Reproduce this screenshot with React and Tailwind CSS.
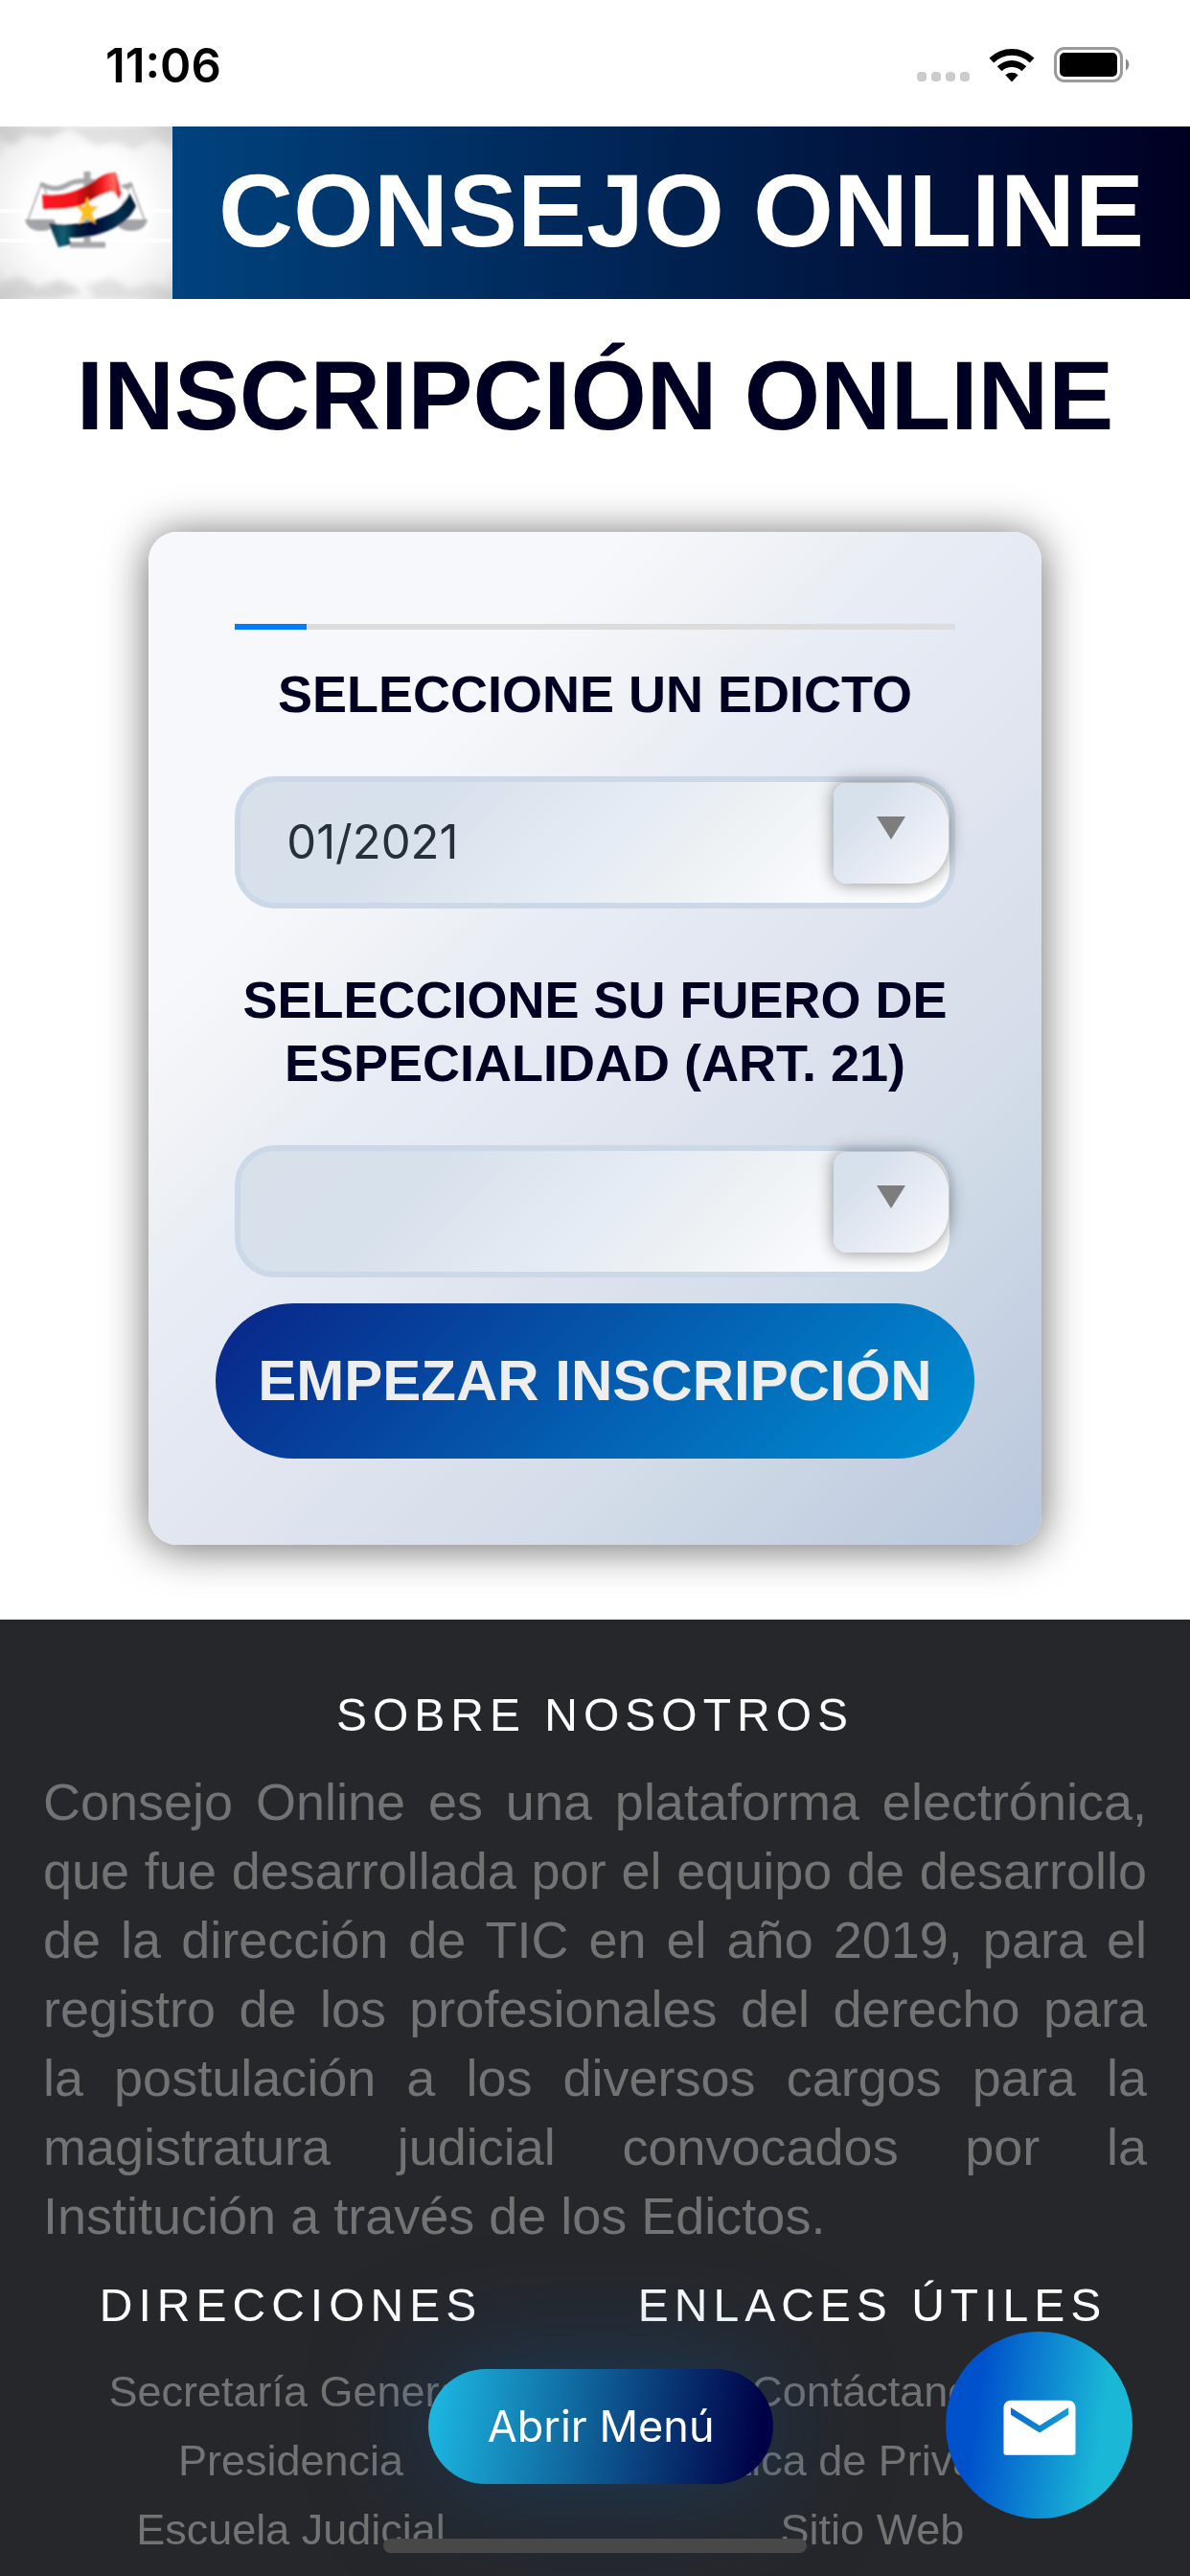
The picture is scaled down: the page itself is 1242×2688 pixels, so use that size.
import { useId } from "react";

const directions = ["Secretaría General", "Presidencia", "Escuela Judicial"];
const usefulLinks = ["Contáctanos", "Política de Privacidad", "Sitio Web"];

function StatusBar() {
  return (
    <div className="flex h-[132px] items-center justify-between pl-[110px] pr-[62px] pt-1">
      <time className="font-[Inter,sans-serif] text-[49px] font-semibold leading-none text-black">11:06</time>
      <div className="flex items-center gap-5">
        <div className="flex gap-[5px] pt-6">
          <span className="size-[10px] rounded-[4px] bg-[#cbcbcb]" />
          <span className="size-[10px] rounded-[4px] bg-[#cbcbcb]" />
          <span className="size-[10px] rounded-[4px] bg-[#cbcbcb]" />
          <span className="size-[10px] rounded-[4px] bg-[#cbcbcb]" />
        </div>
        <svg viewBox="0 0 48 36" className="h-9 w-12" aria-hidden="true">
          <path d="M0.5 10.5A34 34 0 0 1 47.5 10.5L42.8 15.4A27 27 0 0 0 5.2 15.4Z" />
          <path d="M8.8 19.2A22 22 0 0 1 39.2 19.2L34.4 24.2A15 15 0 0 0 13.6 24.2Z" />
          <path d="M17.4 28.2A10 10 0 0 1 30.6 28.2L24 35.4Z" />
        </svg>
        <svg viewBox="0 0 80 38" className="h-[38px] w-20" aria-hidden="true">
          <rect x="1.5" y="1.5" width="69" height="34" rx="9.5" fill="none" stroke="#9a9a9a" strokeWidth="3" />
          <rect x="6" y="6" width="60" height="25" rx="5" />
          <path d="M75 12.5A7 7 0 0 1 75 24.5Z" fill="#8a8a8a" />
        </svg>
      </div>
    </div>
  );
}

function Emblem() {
  return (
    <svg viewBox="0 0 180 180" className="size-[180px] shrink-0" role="img" aria-label="Consejo de la Magistratura">
      <defs>
        <radialGradient id="paper" cx="50%" cy="50%" r="72%">
          <stop offset="0.5" stopColor="#fdfdfd" />
          <stop offset="0.8" stopColor="#eeeeee" />
          <stop offset="1" stopColor="#c9c9c9" />
        </radialGradient>
        <linearGradient id="red" x1="0" x2="1">
          <stop offset="0" stopColor="#ff1a22" />
          <stop offset="0.42" stopColor="#f0131b" />
          <stop offset="0.6" stopColor="#a50a0c" />
          <stop offset="0.75" stopColor="#f5191f" />
          <stop offset="0.9" stopColor="#ff6a5e" />
          <stop offset="1" stopColor="#d8141a" />
        </linearGradient>
        <linearGradient id="navy" x1="0" x2="1">
          <stop offset="0" stopColor="#062c48" />
          <stop offset="0.16" stopColor="#0b6272" />
          <stop offset="0.32" stopColor="#03203c" />
          <stop offset="0.5" stopColor="#020a3a" />
          <stop offset="0.8" stopColor="#05304f" />
          <stop offset="1" stopColor="#041c36" />
        </linearGradient>
        <filter id="soft" x="-5%" y="-5%" width="110%" height="110%">
          <feGaussianBlur stdDeviation="0.9" />
        </filter>
        <filter id="haze" x="-20%" y="-20%" width="140%" height="140%">
          <feGaussianBlur stdDeviation="3" />
        </filter>
      </defs>
      <rect width="180" height="180" fill="url(#paper)" />
      <g filter="url(#haze)" fill="#c4c4c4" opacity="0.6">
        <path d="M0 0H75L50 12L28 8L14 20L0 12Z" />
        <path d="M70 0H180V20L158 14L140 24L122 16L100 20Z" opacity="0.7" />
        <path d="M0 164L20 156L40 168L62 160L86 172L60 180H0Z" />
        <path d="M90 166L116 158L136 170L160 162L180 172V180H100Z" opacity="0.7" />
      </g>
      <path d="M0 88H180M0 119H180" stroke="#ffffff" strokeWidth="4" opacity="0.8" />
      <g filter="url(#soft)">
        <g fill="none" stroke="#a6a7ab">
          <path d="M91 47V124" strokeWidth="7" />
          <path d="M73 123.500H110" strokeWidth="6" />
          <path d="M42 60C54 66 62 66 72 60C80 56 100 55 112 62C122 66 130 64 138 60" strokeWidth="5" />
          <path d="M43 60L29 98M45 60L58 98M136 60L122 98M137 60L151 98" strokeWidth="1.500" />
        </g>
        <path d="M26 97H60C58 106 51 109 43 109C35 109 28 106 26 97Z" fill="#a3a4a9" />
        <path d="M120 97H154C152 106 145 109 137 109C129 109 122 106 120 97Z" fill="#a3a4a9" />
        <path d="M46 80L126 62L136 70L120 88L60 104L54 92Z" fill="#ffffff" />
        <path d="M44 71C68 74 84 66 98 57C108 50 112 48 121 48L127 70L124 76L119 68C108 68 98 76 86 82C74 86 58 87 45 86Z" fill="url(#red)" />
        <path d="M51 101C70 103 88 102 103 96C118 91 130 84 135 69L142 83C136 96 124 106 104 112C92 116 82 116 72 116L74 123L61 126Z" fill="url(#navy)" />
        <path d="M91 73L94.500 83H103L96 90L100 102L91 95L82 102L86 90L79 83H88Z" fill="#fdbf14" />
      </g>
    </svg>
  );
}

function SelectField({ label, options }) {
  const id = useId();
  return (
    <div className="flex flex-col">
      <label htmlFor={id} className="text-center text-[54px] font-bold leading-[66px] text-[#000022]">
        {label}
      </label>
      <div className="relative mt-[53px]">
        <select
          id={id}
          className="block h-[138px] w-full appearance-none rounded-[42px] border-[6px] border-[#cad8e8] bg-linear-[135deg,#d8e1ea_0%,#d7e1eb_25%,#e5ebf4_50%,#edf1f4_65%,#f7f9fc_80%,#ffffff_100%] pl-12 font-[Inter,sans-serif] text-[49px] text-[#263038]"
        >
          {options.map((option) => (
            <option key={option}>{option}</option>
          ))}
        </select>
        <span className="pointer-events-none absolute right-[7px] top-[7px] flex h-[105px] w-[120px] items-center justify-center rounded-l-[14px] rounded-r-[42px] bg-linear-[135deg,#d6e0ea_0%,#d7e1eb_25%,#e7ecf5_60%,#f9fafc_100%] pb-3 shadow-[0_0_18px_rgba(0,0,0,0.45)]">
          <svg viewBox="0 0 30 24" className="h-6 w-[30px]" aria-hidden="true">
            <path d="M0 0H30L15 24Z" fill="#7d7d7d" />
          </svg>
        </span>
      </div>
    </div>
  );
}

function LinkColumn({ title, links }) {
  return (
    <section className="flex-1 text-center">
      <h2 className="text-[48px] leading-[60px] tracking-[6px] text-white">{title}</h2>
      <ul className="mt-6 text-[45px] leading-[72px] text-[#737373]">
        {links.map((link) => (
          <li key={link}>
            <a href="#">{link}</a>
          </li>
        ))}
      </ul>
    </section>
  );
}

export default function App() {
  return (
    <div className="flex min-h-screen flex-col bg-white font-['Liberation_Sans',Arial,sans-serif]">
      <StatusBar />
      <header className="flex items-center bg-linear-[90deg,#004683_10%,#000022_100%]">
        <Emblem />
        <p className="flex-1 whitespace-nowrap pb-1 text-center text-[108px] font-bold leading-[120px] text-white">CONSEJO ONLINE</p>
      </header>

      <main className="flex flex-col pb-[78px]">
        <h1 className="mt-10 text-center text-[102px] font-bold leading-[123px] text-[#000022]">INSCRIPCIÓN ONLINE</h1>
        <form className="mx-[12.5%] mt-20 flex flex-col rounded-[30px] bg-linear-[135deg,#f6f8fc_0%,#f6f8fc_25%,#edf0f4_36%,#e7ecf5_42%,#dfe4ef_58%,#d2dce8_75%,#b8c6dc_100%] px-[90px] pb-[90px] pt-24 shadow-[0_3px_45px_rgba(0,0,0,0.6)]">
          <div className="h-[6px] w-full bg-[#dcdcdc]" role="progressbar" aria-valuenow={10} aria-label="Progreso">
            <div className="h-full w-1/10 bg-[#007bff]" />
          </div>
          <div className="mt-[34px] flex flex-col gap-[62px]">
            <SelectField label="SELECCIONE UN EDICTO" options={["01/2021"]} />
            <SelectField label="SELECCIONE SU FUERO DE ESPECIALIDAD (ART. 21)" options={[""]} />
          </div>
          <button type="button" className="-mx-5 mt-[27px] h-[162px] whitespace-nowrap rounded-full bg-linear-[135deg,#082a8c_5%,#0090d4_100%] text-[60px] font-bold text-[#eeeeee]">
            EMPEZAR INSCRIPCIÓN
          </button>
        </form>
      </main>

      <footer className="flex-1 bg-[#26272b] pt-[70px]">
        <section className="px-[45px]">
          <h2 className="text-center text-[48px] leading-[60px] tracking-[6px] text-white">SOBRE NOSOTROS</h2>
          <p className="mt-6 text-justify text-[54px] leading-[72px] text-[#737373]">
            Consejo Online es una plataforma electrónica, que fue desarrollada por el equipo de desarrollo de la dirección de TIC en el año 2019, para el registro de los profesionales del derecho para la postulación a los diversos cargos para la magistratura judicial convocados por la Institución a través de los Edictos.
          </p>
        </section>
        <div className="mt-7 flex pr-7">
          <LinkColumn title="DIRECCIONES" links={directions} />
          <LinkColumn title="ENLACES ÚTILES" links={usefulLinks} />
        </div>
      </footer>

      <button type="button" className="fixed bottom-24 left-[36%] h-[120px] w-[360px] rounded-full bg-linear-[98deg,#1cb5e0_3%,#000046_95%] font-[Inter,sans-serif] text-[45px] text-white shadow-[0_0_120px_rgba(13,80,140,0.5)]">
        Abrir Menú
      </button>
      <button type="button" aria-label="Enviar correo" className="fixed bottom-[60px] right-[60px] flex size-[195px] items-center justify-center rounded-full bg-linear-[98deg,#0052cc_20%,#1ab8d6_80%]">
        <svg viewBox="0 -1 24 24" className="size-[90px]" fill="white" aria-hidden="true">
          <path d="M20 4H4c-1.100 0-2 .9-2 2v12.600c0 .35.25.6.6.6h18.800c.35 0 .6-.25.6-.6V6c0-1.100-.9-2-2-2zm0 4l-8 5-8-5V6l8 5 8-5v2z" />
        </svg>
      </button>
      <div className="fixed bottom-6 left-1/2 h-[15px] w-[442px] -translate-x-1/2 rounded-full bg-[#484848]" />
    </div>
  );
}
